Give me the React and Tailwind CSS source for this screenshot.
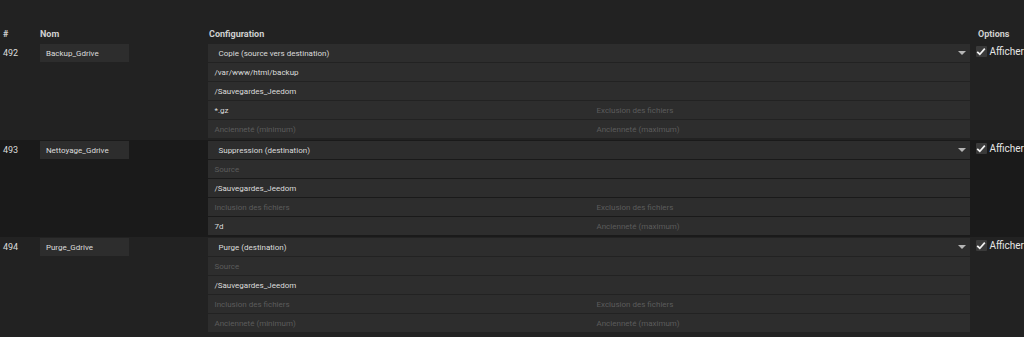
import React from "react";

const rows = [
  {
    id: "492",
    name: "Backup_Gdrive",
    mode: "Copie (source vers destination)",
    source: "/var/www/html/backup",
    dest: "/Sauvegardes_Jeedom",
    incl: "*.gz",
    excl: "",
    minAge: "",
    maxAge: "",
    dark: false,
  },
  {
    id: "493",
    name: "Nettoyage_Gdrive",
    mode: "Suppression (destination)",
    source: "",
    dest: "/Sauvegardes_Jeedom",
    incl: "",
    excl: "",
    minAge: "7d",
    maxAge: "",
    dark: true,
  },
  {
    id: "494",
    name: "Purge_Gdrive",
    mode: "Purge (destination)",
    source: "",
    dest: "/Sauvegardes_Jeedom",
    incl: "",
    excl: "",
    minAge: "",
    maxAge: "",
    dark: false,
  },
];

function Field({ value, placeholder, className = "" }) {
  return (
    <div
      className={
        "h-[18px] bg-[#2d2d2d] flex items-center pt-[1px] px-[6px] text-[8px] whitespace-nowrap overflow-hidden " +
        className
      }
    >
      {value ? (
        <span className="text-[#dcdcdc]">{value}</span>
      ) : (
        <span className="text-[#5c5c5c]">{placeholder}</span>
      )}
    </div>
  );
}

function Row({ r }) {
  return (
    <div
      className={
        "flex pt-[1px] pb-[2px] " + (r.dark ? "bg-[#1a1a1a]" : "bg-[#222222]")
      }
    >
      <div className="w-[37px] pl-[3px] pt-[3px] text-[9px] text-[#dcdcdc]">
        {r.id}
      </div>
      <div className="w-[172px] pl-[3px]">
        <div className="w-[89px] h-[18px] bg-[#2d2d2d] flex items-center pt-[1px] pl-[6px] text-[8px] text-[#dcdcdc]">
          {r.name}
        </div>
      </div>
      <div className="w-[763px] flex flex-col gap-[1px]">
        <div className="h-[18px] bg-[#2d2d2d] flex items-center justify-between pt-[1px] pl-[10px] pr-[4px] text-[8px] text-[#dcdcdc]">
          <span>{r.mode}</span>
          <svg width="8" height="4" viewBox="0 0 8 4" className="mb-[2px]">
            <path d="M0 0 L8 0 L4 4 Z" fill="#b5b5b5" />
          </svg>
        </div>
        <Field value={r.source} placeholder="Source" />
        <Field value={r.dest} placeholder="Destination" />
        <div className="grid grid-cols-[382px_1fr]">
          <Field value={r.incl} placeholder="Inclusion des fichiers" />
          <Field value={r.excl} placeholder="Exclusion des fichiers" />
        </div>
        <div className="grid grid-cols-[382px_1fr]">
          <Field value={r.minAge} placeholder="Ancienneté (minimum)" />
          <Field value={r.maxAge} placeholder="Ancienneté (maximum)" />
        </div>
      </div>
      <div className="flex-1 pl-[6px] pt-[1px] flex items-start gap-[3px] whitespace-nowrap">
        <div className="w-[11px] h-[11px] mt-[1px] bg-[#3a3a3a] rounded-[1px] flex items-center justify-center">
          <svg width="10" height="9" viewBox="0 0 10 9">
            <path
              d="M1.2 4.8 L3.8 7.2 L8.8 1.6"
              fill="none"
              stroke="#f2f2f2"
              strokeWidth="1.7"
            />
          </svg>
        </div>
        <span className="text-[10px] leading-[13px] text-[#e6e6e6]">Afficher</span>
      </div>
    </div>
  );
}

export default function App() {
  return (
    <div
      className="w-[1024px] h-[337px] overflow-hidden bg-[#222222]"
      style={{ fontFamily: "Roboto, 'Liberation Sans', sans-serif" }}
    >
      <div className="h-[26px]" />
      <div className="flex h-[17px] items-center text-[9px] font-bold text-[#d0d0d0]">
        <div className="w-[37px] pl-[3px]">#</div>
        <div className="w-[172px] pl-[3px]">Nom</div>
        <div className="w-[763px]">Configuration</div>
        <div className="flex-1 pl-[6px]">Options</div>
      </div>
      {rows.map((r) => (
        <Row key={r.id} r={r} />
      ))}
    </div>
  );
}
